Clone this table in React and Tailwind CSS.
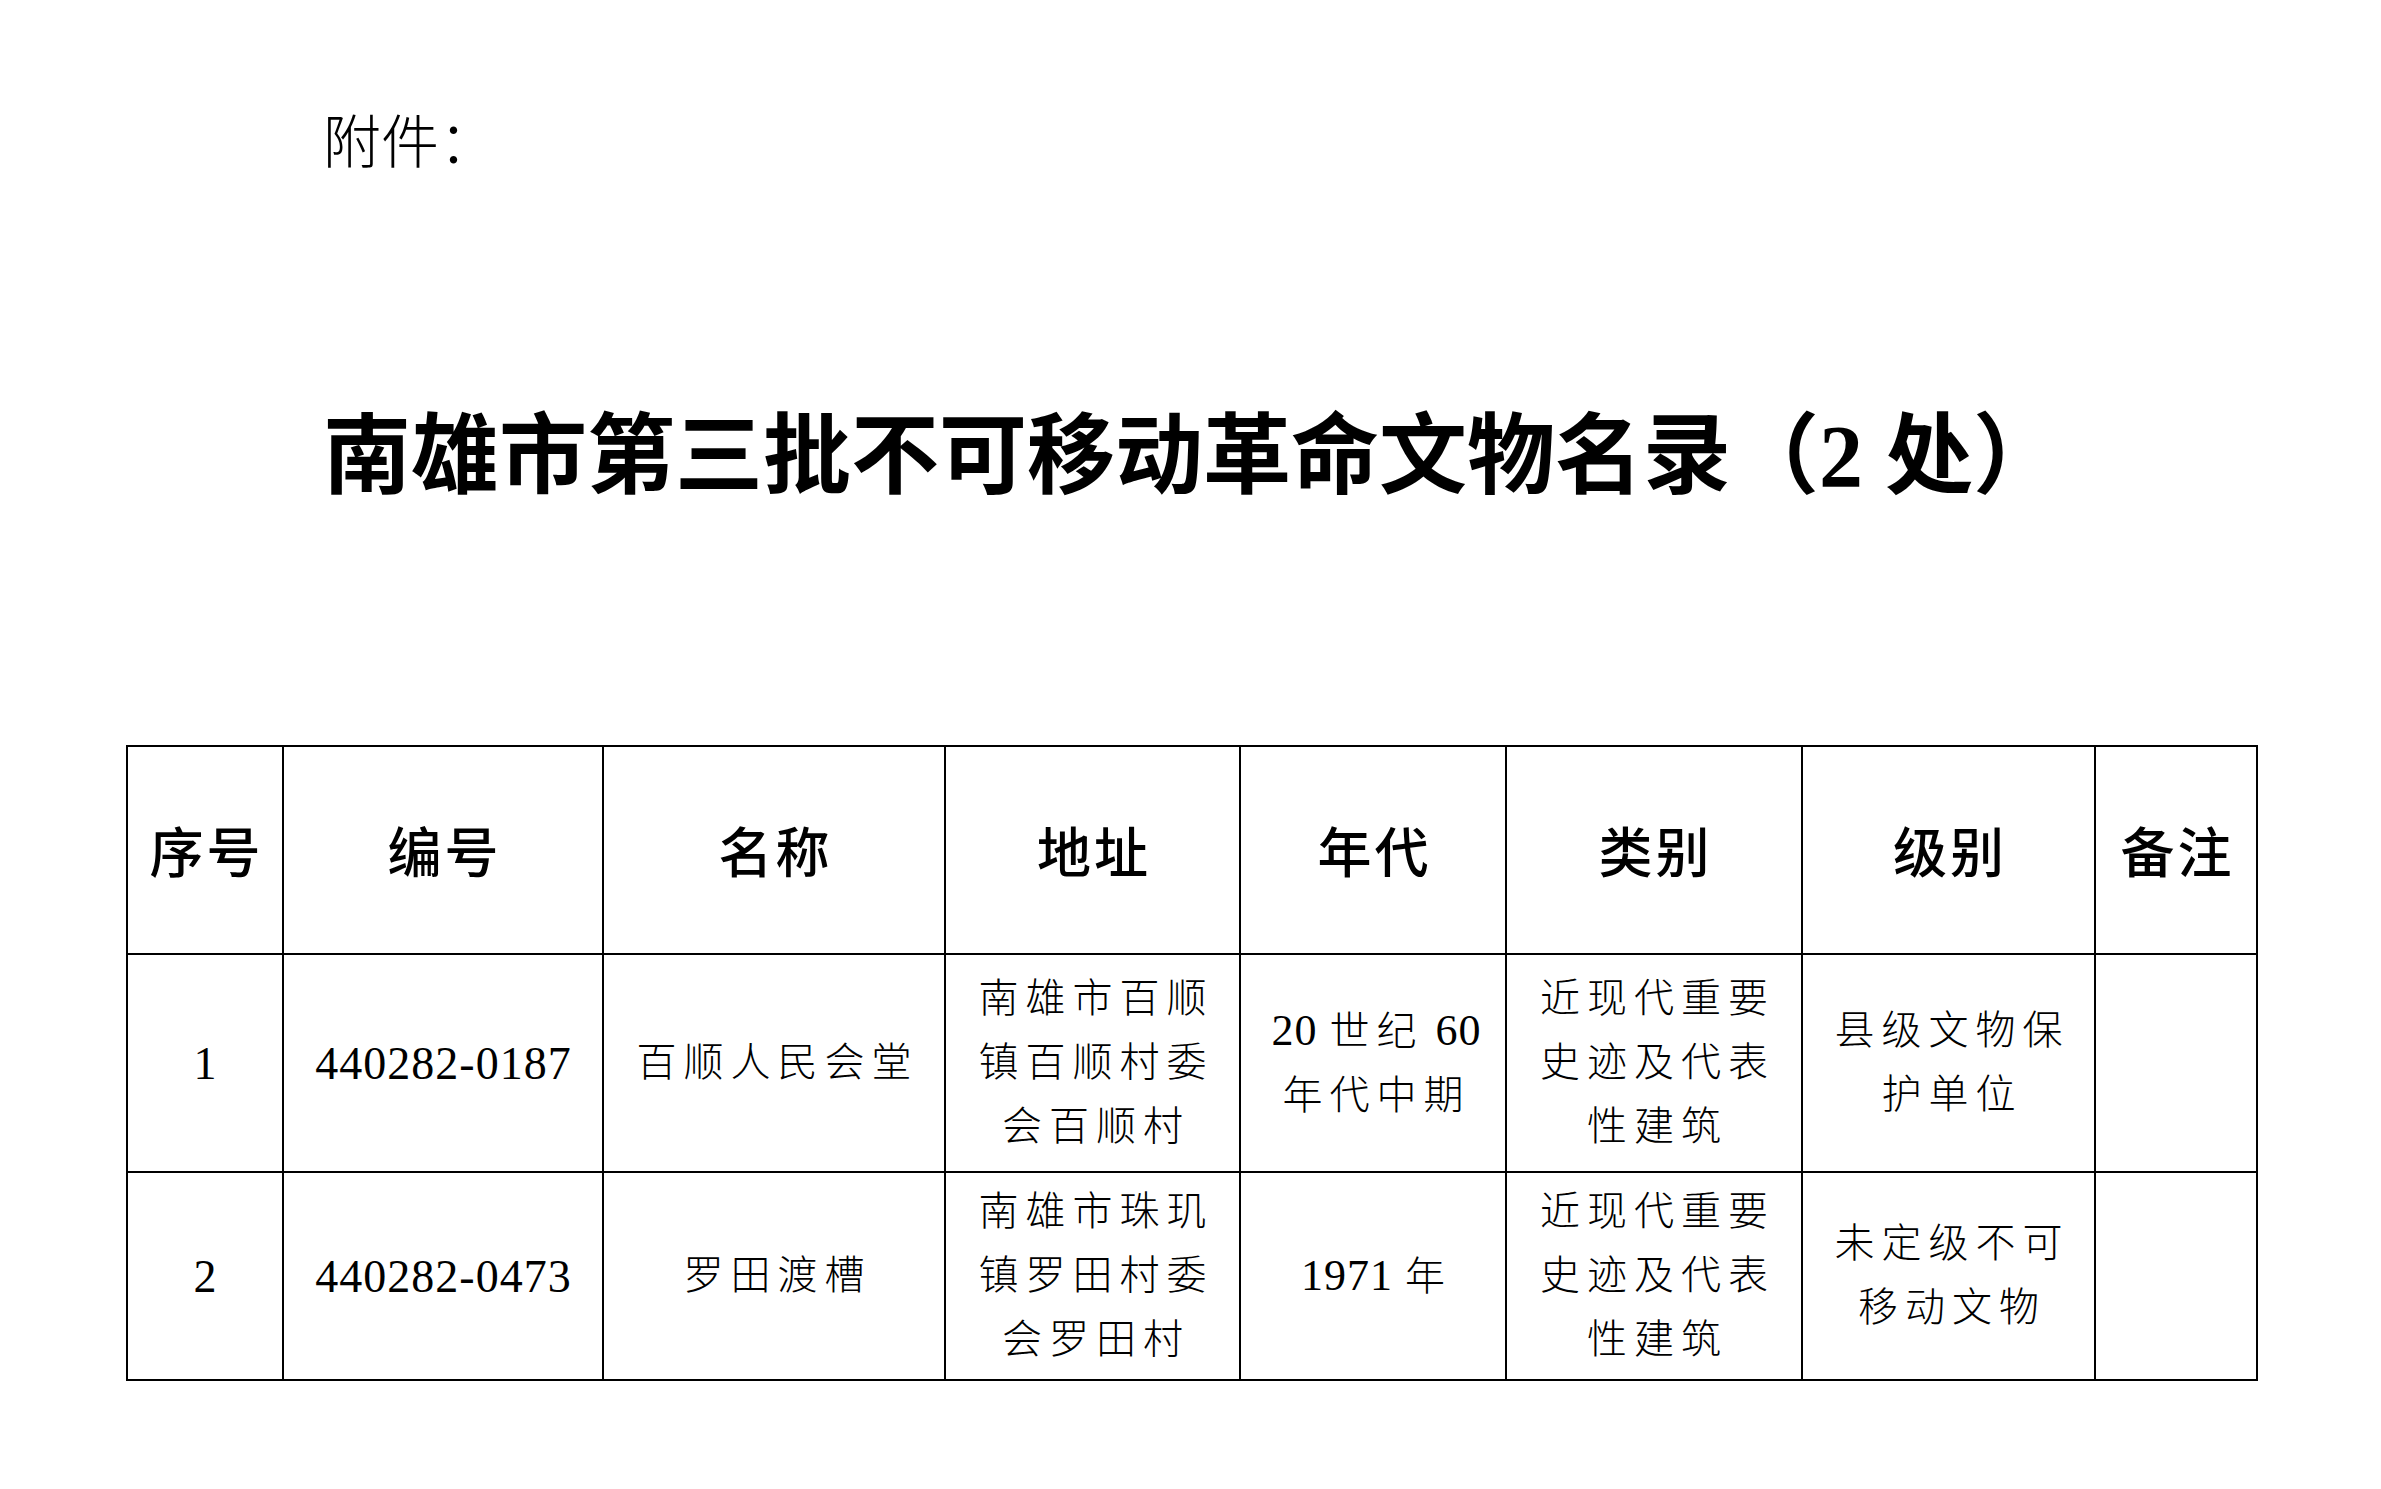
const cjk = { fontFamily: '"Noto Sans CJK SC", sans-serif' };
const mixed = { fontFamily: '"Liberation Serif", "Noto Sans CJK SC", serif' };

const rows = [
    {
        no: '1',
        code: '440282-0187',
        name: '百顺人民会堂',
        addr: ['南雄市百顺', '镇百顺村委', '会百顺村'],
        era: [['20 ', '世纪', ' 60'], ['', '年代中期', '']],
        type: ['近现代重要', '史迹及代表', '性建筑'],
        level: ['县级文物保', '护单位'],
    },
    {
        no: '2',
        code: '440282-0473',
        name: '罗田渡槽',
        addr: ['南雄市珠玑', '镇罗田村委', '会罗田村'],
        era: [['1971 ', '年', '']],
        type: ['近现代重要', '史迹及代表', '性建筑'],
        level: ['未定级不可', '移动文物'],
    },
];

const headers = ['序号', '编号', '名称', '地址', '年代', '类别', '级别', '备注'];

function Lines({ lines }) {
    return (
        <div className="text-[40px] leading-[64px] tracking-[7px] pl-[7px] font-light" style={mixed}>
            {lines.map((line, i) => (
                <div key={i}>{line}</div>
            ))}
        </div>
    );
}

function Era({ parts }) {
    return (
        <div className="text-[40px] leading-[64px] tracking-[7px] pl-[7px] font-light" style={mixed}>
            {parts.map(([a, b, c], i) => (
                <div key={i} className="whitespace-pre">
                    {a && <span className="text-[44px] tracking-[1px]">{a}</span>}
                    {b}
                    {c && <span className="text-[44px] tracking-[1px]">{c}</span>}
                </div>
            ))}
        </div>
    );
}

function App() {
    const cell = 'border-2 border-black p-0 text-center align-middle';

    return (
        <div className="w-full min-h-[1489px] bg-white text-black">
            <div className="pt-[109px] pl-[323px] text-[58px] leading-none h-[167px] font-light" style={cjk}>
                附件：
            </div>

            <h1 className="mt-[246px] pl-[323px] text-[88px] leading-none font-bold whitespace-nowrap" style={mixed}>
                南雄市第三批不可移动革命文物名录（2 处）
            </h1>

            <table className="mt-[244px] ml-[126px] w-[2130px] table-fixed border-collapse">
                <colgroup>
                    <col className="w-[156px]" />
                    <col className="w-[320px]" />
                    <col className="w-[342px]" />
                    <col className="w-[295px]" />
                    <col className="w-[266px]" />
                    <col className="w-[296px]" />
                    <col className="w-[293px]" />
                    <col className="w-[162px]" />
                </colgroup>
                <thead>
                    <tr>
                        {headers.map(h => (
                            <th
                                key={h}
                                className={`${cell} h-[208px] text-[54px] leading-none tracking-[3px] pl-[3px] font-medium`}
                                style={cjk}
                            >
                                {h}
                            </th>
                        ))}
                    </tr>
                </thead>
                <tbody>
                    {rows.map((r, i) => (
                        <tr key={r.no}>
                            <td className={`${cell} ${i === 0 ? 'h-[218px]' : 'h-[208px]'} text-[46px]`} style={mixed}>
                                {r.no}
                            </td>
                            <td className={`${cell} text-[46px] tracking-[1px] pl-[1px]`} style={mixed}>
                                {r.code}
                            </td>
                            <td className={cell}>
                                <Lines lines={[r.name]} />
                            </td>
                            <td className={cell}>
                                <Lines lines={r.addr} />
                            </td>
                            <td className={cell}>
                                <Era parts={r.era} />
                            </td>
                            <td className={cell}>
                                <Lines lines={r.type} />
                            </td>
                            <td className={cell}>
                                <Lines lines={r.level} />
                            </td>
                            <td className={cell}></td>
                        </tr>
                    ))}
                </tbody>
            </table>
        </div>
    );
}

export default App;
